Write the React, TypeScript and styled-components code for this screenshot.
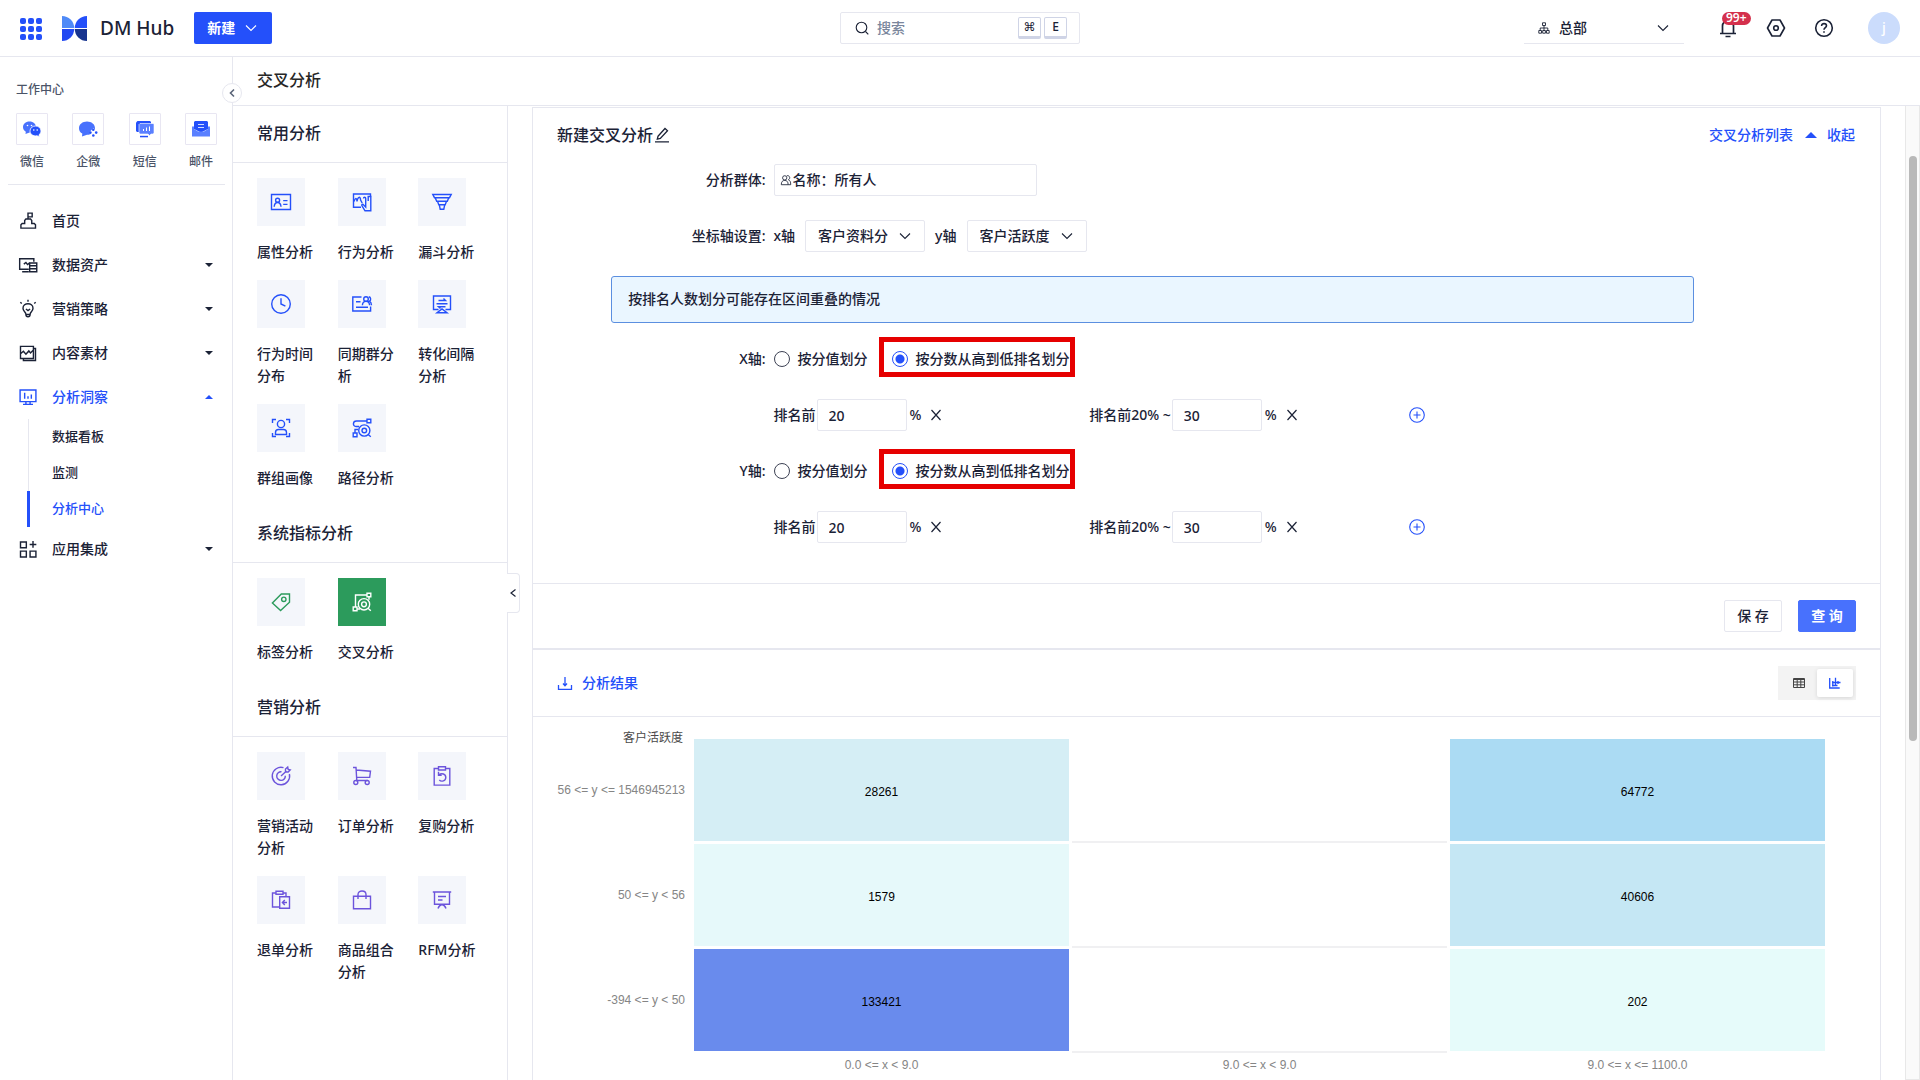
import React, { useState } from "react";
import styled, { createGlobalStyle, css } from "styled-components";

const c = {
  text: "#1b2236",
  sub: "#4b5468",
  brand: "#2450fa",
  line: "#e6e7ef",
  tile: "#f4f6fb",
  green: "#2c9b5c",
  purple: "#6c54dc",
  danger: "#e60000",
};

const Global = createGlobalStyle`
  *, *::before, *::after { box-sizing: border-box; }
  body { margin: 0; background: #fff; overflow: hidden; }
  body, button, input, select {
    font-family: "Noto Sans", "Noto Sans CJK SC", sans-serif;
    font-size: 14px;
    line-height: 22px;
    font-weight: 500;
    color: ${c.text};
  }
  button { padding: 0; border: 0; background: none; cursor: pointer; }
  a { text-decoration: none; color: inherit; }
  h1, h2, p, ul { margin: 0; padding: 0; }
  ul { list-style: none; }
`;

/* ---------- icons ---------- */

const Svg = styled.svg<{ $w?: number }>`
  display: block;
  flex: none;
  fill: none;
  stroke: currentColor;
  stroke-width: ${(p) => p.$w ?? 1.4};
  overflow: visible;
`;

const glyphs: Record<string, React.ReactNode> = {
  idcard: (
    <>
      <path d="M2.5 4.5h19v15h-19z" />
      <circle cx="8.6" cy="10.3" r="2" />
      <path d="M5.2 16.8c.2-2.8 1.4-4.3 3.4-4.3s3.2 1.5 3.4 4.3M14.2 10.6h4.3M14.2 14.4h4.3" />
    </>
  ),
  behavior: (
    <>
      <path d="M11 17.2H3.5V4h17v2.5" />
      <path d="M4 11.5c1.200-4 2.600-4 3 0 .8-5 3.400-5.500 3.600-1.500l1.600 3" />
      <path d="M13.500 8.500c0-1.600 2.200-1.600 2.200 0V17l-2.500-2.500c-1.500-.6-1.800.6-1 1.600L15 20.800h5.800V6.500h-2.600v4.500" />
    </>
  ),
  funnel: (
    <path d="M2.800 4.500h18.400l-1.700 3.200h-15zM5.200 7.700h13.600l-1.500 3.600H6.700zM7.500 11.300h9l-1.300 3.500H8.800zM9.300 14.800h5.400l-.9 4.400h-3.600zM6.700 11.300h10.600" />
  ),
  clock: (
    <>
      <circle cx="12" cy="12" r="9.3" />
      <path d="M12 6.2V12l4.4 2.2" />
    </>
  ),
  cohort: (
    <>
      <path d="M11.5 5H2.800v14h17.800v-4.500M6 9.800h4.500M6 15.200h12" />
      <circle cx="16" cy="7" r="2.3" />
      <path d="M12.400 13.200c.2-2.500 1.500-3.800 3.600-3.800s3.400 1.300 3.600 3.800M18.800 4.800c2.200.3 2.500 3.600.6 4.400 1.400.7 2 2 2.100 4" />
    </>
  ),
  convert: (
    <>
      <path d="M8.500 17.500H3.500V4h17v13.500h-5M7 20.800h10L12 17z" />
      <path d="M6.500 11.800h11M8.500 8.500h7L13.500 6.600M15.500 14.800h-7l2 1.800" />
    </>
  ),
  portrait: (
    <>
      <path d="M3.500 7V3.500H7M17 3.500h3.500V7M3.500 17v3.500H7M17 20.500h3.500V17" />
      <circle cx="12" cy="8" r="3.6" />
      <path d="M6.500 18.500v-2c0-2 1.300-3 3-3h5c1.700 0 3 1 3 3v2z" />
    </>
  ),
  path: (
    <>
      <path d="M17 3.200h3.800v3.600H17zM3.200 17H7v3.800H3.200zM17 5H6.500c-4 0-4 5.500-.5 5.500h3M5 17v-3.500h3" />
      <circle cx="14.3" cy="14.5" r="5.6" />
      <circle cx="14.3" cy="14.5" r="2.3" />
      <path d="M18.200 18.500l2.600 2.300" />
    </>
  ),
  tag: (
    <>
      <path d="M12.300 4h8.200v8.200L11.600 20.600 3.400 13z" />
      <circle cx="14.8" cy="9.3" r="2.2" />
    </>
  ),
  cross: (
    <>
      <path d="M17 3.200h3.800v3.600H17zM3.200 17H7v3.800H3.200zM17 5H5.500v12M7 19h3M19 6.800v3" />
      <circle cx="14" cy="14.3" r="5.7" />
      <circle cx="14" cy="14.3" r="2.4" />
      <path d="M18 18.300l2.800 2.500" />
    </>
  ),
  target: (
    <>
      <path d="M14.500 3.700A8.700 8.700 0 1 0 20.400 10" />
      <path d="M12.500 7.800a4.300 4.300 0 1 0 3.800 3.900M12 12l5.500-5M16.500 7.800V5l2.200-2 .5 2.500 2 .5-2 2z" />
    </>
  ),
  cart: (
    <>
      <path d="M3 3.500h3l.8 13h10.700M6.200 6l14.300 1.200-.8 6.200H6.700" />
      <circle cx="5.8" cy="18.5" r="2" />
      <circle cx="17.2" cy="18.5" r="2" />
    </>
  ),
  repurchase: (
    <>
      <path d="M8.500 4.500H4.200v16.600h15.600V4.500h-4.300M8.500 2.800h7v3.200h-7z" />
      <path d="M8.500 7.800v3.400h3.200M8.800 11c3-2.600 7-.8 7 2.400 0 3.400-4.400 4.800-6.500 2.600" />
    </>
  ),
  refund: (
    <>
      <path d="M7 5H3.500v14h7.200M14 5h3v3.500M7 3.200h7v3H7z" />
      <path d="M10.700 8.700h9.800v11.600h-9.800zM18 14.500h-4.500M15.800 12l-2.400 2.500 2.400 2.500" />
    </>
  ),
  bag: <path d="M3.500 8.200h17v12.600h-17zM8 11V6.500c0-4.700 8-4.700 8 0V11" />,
  board: <path d="M2.800 4h18.400M4.500 4v12.300h15V4M8 8.500h8M8 12h4.500M8 20.500c.8-2.500 2-3.600 4-4 2 .4 3.200 1.500 4 4" />,
  home: <path d="M12 9.500V2.500h5V7h-5M3.500 20.500v-4l1.500-1.500h3v-3.500l1.500-2h5.500l1.500 2V15h3l1.500 1.500v4z" />,
  assets: (
    <>
      <path d="M13 17H2V4.500h17V8M5 20h8M7 11l2.500-2 2 2.500L14 9.500" />
      <path d="M14 9.500h8.500V20H14zM14 13h8.500M14 16.500h8.500" />
    </>
  ),
  bulb: (
    <path d="M9.500 18.500c0-3-3.500-3.500-3.500-7.500 0-7 12-7 12 0 0 4-3.500 4.500-3.500 7.500zM9.500 18.500c0 3.700 5 3.700 5 0M9.500 12l2.500 2 2.500-2M12 3.200V.8M4.500 5.500L2.800 4M19.500 5.500L21.200 4" />
  ),
  content: <path d="M3 4h15.500v14.500H3zM18.500 6.500H21V21H6.500v-2.500M3 13l3.500-3 3 3.500 3.500-4 2 2.500 3.500-3.500" />,
  monitor: <path d="M2.500 3.500h19v14h-19zM6 20.800h12M9.500 17.500v3M14.500 17.500v3M8 7v7M12 11v3M16 9v5" />,
  apps: <path d="M3 3.500h7v7H3zM3 14.500h7v7H3zM14.500 14.500h7v7h-7zM18 2.500v8M14 6.500h8" />,
};

const Glyph = ({ name, size = 24, w }: { name: string; size?: number; w?: number }) => (
  <Svg width={size} height={size} viewBox="0 0 24 24" $w={w} aria-hidden>
    {glyphs[name]}
  </Svg>
);

const ChevronDown = () => (
  <Svg width="12" height="8" viewBox="0 0 12 8" $w={1.1} aria-hidden>
    <path d="M1 1.500l5 5 5-5" />
  </Svg>
);

const Triangle = ({ up, size = 8 }: { up?: boolean; size?: number }) => (
  <Svg width={size} height={size / 2} viewBox="0 0 8 4" aria-hidden>
    <path d={up ? "M0 4l4-4 4 4z" : "M0 0l4 4 4-4z"} fill="currentColor" stroke="none" />
  </Svg>
);

/* ---------- shell ---------- */

const Page = styled.div`
  display: flex;
  flex-direction: column;
  height: 100vh;
  overflow: hidden;
`;

const Header = styled.header`
  display: grid;
  grid-template-columns: 1fr 240px 1fr;
  align-items: center;
  flex: none;
  height: 57px;
  padding: 0 20px;
  border-bottom: 1px solid ${c.line};
`;

const HeaderSide = styled.div<{ $end?: boolean }>`
  display: flex;
  align-items: center;
  justify-content: ${(p) => (p.$end ? "flex-end" : "flex-start")};
`;

const Brand = styled.a`
  display: flex;
  align-items: center;
  gap: 13px;
  margin: 0 20px 0 22px;
  font-size: 19px;
  line-height: 28px;
`;

const CreateButton = styled.button`
  display: flex;
  align-items: center;
  gap: 10px;
  height: 32px;
  padding: 0 15px 0 13px;
  border-radius: 2px;
  background: ${c.brand};
  color: #fff;
  font-weight: 700;
`;

const Search = styled.label`
  display: flex;
  align-items: center;
  gap: 3px;
  height: 32px;
  padding: 0 12px 0 14px;
  border: 1px solid ${c.line};
  border-radius: 2px;
`;

const SearchInput = styled.input`
  flex: 1;
  min-width: 0;
  margin-left: 5px;
  padding: 0;
  border: 0;
  outline: 0;
  background: none;
  &::placeholder { color: #7a869c; }
`;

const Key = styled.kbd`
  width: 23px;
  height: 22px;
  border: 1px solid #cfd4e6;
  border-bottom-width: 3px;
  border-radius: 2px;
  font-family: "Noto Sans", "DejaVu Sans", sans-serif;
  font-size: 12px;
  line-height: 18px;
  text-align: center;
`;

const OrgSelect = styled.button`
  display: flex;
  align-items: center;
  gap: 9px;
  width: 160px;
  height: 32px;
  margin-right: 34px;
  padding: 0 15px 0 14px;
  border-bottom: 1px solid ${c.line};
  text-align: left;
  & > span { flex: 1; }
`;

const HeaderActions = styled.div`
  display: flex;
  align-items: center;
  gap: 28px;
  margin-right: 34px;
`;

const IconButton = styled.button`
  position: relative;
  display: grid;
  place-items: center;
  width: 20px;
  height: 20px;
`;

const Badge = styled.span`
  position: absolute;
  left: 4px;
  top: -6px;
  height: 13px;
  padding: 0 4px;
  border-radius: 7px;
  background: #d4304c;
  color: #fff;
  font-size: 12px;
  line-height: 12px;
  font-weight: 600;
`;

const Avatar = styled.button`
  width: 32px;
  height: 32px;
  border-radius: 50%;
  background: #cbdcfc;
  color: #fff;
`;

const Body = styled.div`
  display: flex;
  flex: 1;
  min-height: 0;
`;

/* ---------- sidebar ---------- */

const Sidebar = styled.aside`
  position: relative;
  flex: none;
  width: 233px;
  padding: 24px 7px 0 8px;
  border-right: 1px solid ${c.line};
`;

const SidebarTitle = styled.p`
  padding: 0 8px;
  font-size: 12px;
  line-height: 18px;
  color: ${c.sub};
`;

const Channels = styled.div`
  display: flex;
  justify-content: space-between;
  margin-bottom: 14px;
  padding: 14px 8px;
  border-bottom: 1px solid ${c.line};
`;

const Channel = styled.button`
  display: grid;
  justify-items: center;
  gap: 9px;
  width: 32px;
  font-size: 12px;
  line-height: 16px;
  color: ${c.sub};
`;

const ChannelIcon = styled.span`
  display: grid;
  place-items: center;
  width: 32px;
  height: 32px;
  border: 1px solid #e8e6f2;
  border-radius: 1px;
`;

const NavItem = styled.a<{ $active?: boolean }>`
  display: flex;
  align-items: center;
  gap: 14px;
  height: 44px;
  padding: 0 12px 0 10px;
  color: ${(p) => (p.$active ? c.brand : c.text)};
  & > span { flex: 1; }
`;

const SubList = styled.ul`
  margin-left: 20px;
  border-left: 1px solid ${c.line};
`;

const SubItem = styled.a<{ $active?: boolean }>`
  display: block;
  height: 36px;
  margin-left: -2px;
  padding-left: 22px;
  border-left: 3px solid ${(p) => (p.$active ? c.brand : "transparent")};
  font-size: 13px;
  line-height: 34px;
  color: ${(p) => (p.$active ? c.brand : c.text)};
`;

const CollapseButton = styled.button`
  position: absolute;
  z-index: 2;
  top: 26px;
  right: -10px;
  display: grid;
  place-items: center;
  width: 20px;
  height: 20px;
  border: 1px solid ${c.line};
  border-radius: 50%;
  background: #fff;
  color: #5a6478;
`;

/* ---------- analysis picker ---------- */

const Content = styled.div`
  display: flex;
  flex-direction: column;
  flex: 1;
  min-width: 0;
`;

const PageTitle = styled.h1`
  flex: none;
  height: 49px;
  padding-left: 24px;
  border-bottom: 1px solid ${c.line};
  color: #262626;
  font-size: 16px;
  line-height: 46px;
  font-weight: 500;
`;

const Picker = styled.aside`
  position: relative;
  flex: none;
  width: 275px;
  border-right: 1px solid ${c.line};
`;

const PickerTitle = styled.h2`
  height: 57px;
  padding-left: 24px;
  border-bottom: 1px solid ${c.line};
  font-size: 16px;
  line-height: 54px;
  font-weight: 500;
`;

const PickerGrid = styled.div`
  display: grid;
  grid-template-columns: repeat(3, 1fr);
  row-gap: 17px;
  padding: 15px 8px 17px 24px;
`;

const PickerItem = styled.a`
  width: 60px;
`;

const Tile = styled.span<{ $tone: string; $active?: boolean }>`
  display: grid;
  place-items: center;
  width: 48px;
  height: 48px;
  margin-bottom: 15px;
  background: ${(p) => (p.$active ? p.$tone : c.tile)};
  color: ${(p) => (p.$active ? "#fff" : p.$tone)};
`;

const PickerHandle = styled.button`
  position: absolute;
  left: 100%;
  top: 467px;
  display: grid;
  place-items: center;
  width: 13px;
  height: 40px;
  border: 1px solid ${c.line};
  border-left: 0;
  border-radius: 0 4px 4px 0;
  background: #fff;
`;

/* ---------- main card ---------- */

const Main = styled.main`
  flex: 1;
  min-width: 0;
  padding: 1px 24px 0;
  overflow: hidden;
`;

const ScrollTrack = styled.div`
  flex: none;
  width: 15px;
  height: 100%;
  padding: 50px 3px;
  border: 1px solid #e8e8e8;
  border-top: 0;
  background: #fafafa;
`;

const ScrollThumb = styled.div`
  width: 8px;
  height: 67%;
  border-radius: 4px;
  background: #b9b9b9;
`;

const Card = styled.section`
  border: 1px solid ${c.line};
`;

const Between = styled.div`
  display: flex;
  align-items: center;
  justify-content: space-between;
`;

const CardHead = styled(Between)`
  height: 56px;
  padding: 0 25px 2px 24px;
`;

const CardTitle = styled.h2`
  display: flex;
  align-items: center;
  gap: 1px;
  font-size: 16px;
  line-height: 24px;
  font-weight: 500;
`;

const CardLinks = styled.div`
  display: flex;
  align-items: center;
  gap: 12px;
  color: ${c.brand};
`;

const Collapse = styled.button`
  display: flex;
  align-items: center;
  gap: 10px;
  color: inherit;
`;

const Form = styled.form`
  padding: 0 24px 16px;
`;

const Row = styled.div`
  display: grid;
  grid-template-columns: 4fr 20fr;
  align-items: center;
  min-height: 32px;
  margin-bottom: 24px;
`;

const RowLabel = styled.span`
  padding-right: 8px;
  text-align: right;
`;

const Inline = styled.div<{ $gap?: number }>`
  display: flex;
  align-items: center;
  gap: ${(p) => p.$gap ?? 8}px;
`;

const box = css`
  height: 32px;
  border: 1px solid ${c.line};
  border-radius: 2px;
  background: #fff;
`;

const GroupField = styled.span`
  ${box}
  display: flex;
  align-items: center;
  gap: 1px;
  width: 263px;
  padding-left: 5px;
`;

const BareInput = styled.input`
  flex: 1;
  min-width: 0;
  padding: 0;
  border: 0;
  outline: 0;
  background: none;
`;

const SelectWrap = styled.span`
  ${box}
  display: flex;
  align-items: center;
  width: 120px;
  padding-right: 13px;
  svg { pointer-events: none; }
`;

const Select = styled.select`
  flex: 1;
  min-width: 0;
  height: 30px;
  padding: 0 0 0 12px;
  border: 0;
  outline: 0;
  background: none;
  appearance: none;
`;

const NoticeRow = styled.div`
  display: grid;
  grid-template-columns: 1fr 20fr 3fr;
  margin-bottom: 20px;
`;

const Notice = styled.p`
  grid-column: 2;
  height: 47px;
  padding: 0 16px;
  border: 1px solid #5b8fe0;
  border-radius: 3px;
  background: #eaf6ff;
  line-height: 43px;
`;

const RadioLabel = styled.label<{ $marked?: boolean }>`
  position: relative;
  display: flex;
  align-items: center;
  gap: 8px;
  height: 32px;
  ${(p) =>
    p.$marked &&
    css`
      &::after {
        content: "";
        position: absolute;
        inset: -6px -5px -2px -13px;
        border: 5px solid ${c.danger};
        pointer-events: none;
      }
    `}
`;

const Radio = styled.input`
  appearance: none;
  width: 16px;
  height: 16px;
  margin: 0;
  border: 1px solid #3d4254;
  border-radius: 50%;
  &:checked {
    border-color: ${c.brand};
    background: radial-gradient(circle, ${c.brand} 0 4px, #fff 5px);
  }
`;

const Ranges = styled.div`
  display: grid;
  grid-template-columns: 7fr 7fr 10fr;
  align-items: center;
`;

const NumberInput = styled.input`
  ${box}
  width: 90px;
  padding: 0 11px;
  outline: 0;
`;

const RemoveButton = styled.button`
  margin-left: 8px;
`;

const Suffix = styled.span`
  margin-left: 3px;
`;

const AddButton = styled.button`
  display: grid;
  justify-self: start;
  margin-left: 4px;
  color: ${c.brand};
`;

const RangeLabel = styled.label`
  display: flex;
  align-items: center;
  gap: 1px;
`;

const Footer = styled.div`
  display: flex;
  justify-content: flex-end;
  gap: 16px;
  padding: 16px 24px;
  border-top: 1px solid ${c.line};
  border-bottom: 2px solid ${c.line};
`;

const Button = styled.button<{ $primary?: boolean }>`
  width: 58px;
  height: 32px;
  border: 1px solid ${(p) => (p.$primary ? "#4871fd" : c.line)};
  border-radius: 2px;
  background: ${(p) => (p.$primary ? "#4871fd" : "#fff")};
  color: ${(p) => (p.$primary ? "#fff" : c.text)};
  font-weight: ${(p) => (p.$primary ? 700 : 500)};
  line-height: 28px;
`;

const ResultHead = styled(Between)`
  height: 67px;
  padding: 0 24px;
  border-bottom: 1px solid ${c.line};
`;

const Download = styled.button`
  display: flex;
  align-items: center;
  gap: 9px;
  color: ${c.brand};
`;

const Toggle = styled.div`
  display: flex;
  padding: 3px;
  background: #f3f3f3;
`;

const ToggleButton = styled.button<{ $on?: boolean }>`
  display: grid;
  place-items: center;
  width: 36px;
  height: 28px;
  border-radius: 2px;
  background: ${(p) => (p.$on ? "#fff" : "none")};
  box-shadow: ${(p) => (p.$on ? "0 1px 4px rgba(0,0,0,.12)" : "none")};
  color: ${(p) => (p.$on ? c.brand : "#444")};
`;

/* ---------- heat map ---------- */

const ChartLayout = styled.div`
  display: grid;
  grid-template-columns: 161px 1fr;
  padding: 22px 55px 20px 0;
  font-family: "Liberation Sans", "Noto Sans CJK SC", sans-serif;
  font-size: 12px;
  line-height: 16px;
  font-weight: 400;
`;

const ChartLabels = styled.div`
  display: grid;
  grid-auto-rows: 102px;
  gap: 3px;
  color: #858585;
`;

const YLabel = styled.span`
  position: relative;
  display: flex;
  align-items: center;
  justify-content: flex-end;
  padding-right: 9px;
`;

const AxisName = styled.span`
  position: absolute;
  top: -9px;
  right: 11px;
  color: #4a4a4a;
`;

const Cells = styled.div`
  display: grid;
  grid-template-columns: repeat(3, 1fr);
  grid-template-rows: repeat(3, 102px) 19px;
  gap: 3px;
`;

const Cell = styled.div<{ $bg?: string }>`
  display: grid;
  place-items: center;
  padding-top: 4px;
  background: ${(p) => p.$bg ?? "#fff"};
  box-shadow: ${(p) => (p.$bg ? "none" : "0 2px #f0f0f2")};
  color: #000;
`;

const XLabel = styled.span`
  align-self: end;
  text-align: center;
  color: #858585;
`;

/* ---------- data ---------- */

const sections = [
  {
    title: "常用分析",
    tone: c.brand,
    items: [
      ["idcard", "属性分析"],
      ["behavior", "行为分析"],
      ["funnel", "漏斗分析"],
      ["clock", "行为时间分布"],
      ["cohort", "同期群分析"],
      ["convert", "转化间隔分析"],
      ["portrait", "群组画像"],
      ["path", "路径分析"],
    ],
  },
  {
    title: "系统指标分析",
    tone: c.green,
    items: [
      ["tag", "标签分析"],
      ["cross", "交叉分析"],
    ],
  },
  {
    title: "营销分析",
    tone: c.purple,
    items: [
      ["target", "营销活动分析"],
      ["cart", "订单分析"],
      ["repurchase", "复购分析"],
      ["refund", "退单分析"],
      ["bag", "商品组合分析"],
      ["board", "RFM分析"],
    ],
  },
];

const yBands = ["56 <= y <= 1546945213", "50 <= y < 56", "-394 <= y < 50"];
const xBands = ["0.0 <= x < 9.0", "9.0 <= x < 9.0", "9.0 <= x <= 1100.0"];
const heat: { v?: number; bg?: string }[] = [
  { v: 28261, bg: "#d5eef5" }, {}, { v: 64772, bg: "#abdbf3" },
  { v: 1579, bg: "#e6f9fa" }, {}, { v: 40606, bg: "#c5e7f4" },
  { v: 133421, bg: "#698bed" }, {}, { v: 202, bg: "#e6fbfa" },
];

const channels: [string, React.ReactNode][] = [
  ["微信", (
    <>
      <path d="M7.500 1.500c4 0 6.500 2.500 6.500 5.500s-2.500 5.500-6.500 5.500l-4 1.500.3-2.300C2 10.700 1 9 1 7c0-3 2.500-5.500 6.500-5.500z" fill="#4871fd" />
      <path d="M13.500 6c3 0 5.500 2 5.500 5 0 1.600-.8 3-2 3.800l.3 1.900-2.300-.9c-4 .6-7-1.600-7-4.800 0-3 2.500-5 5.500-5z" fill={c.brand} stroke="#fff" strokeWidth=".8" />
      <circle cx="5.5" cy="5.5" r=".8" fill="#fff" /><circle cx="9.5" cy="5.5" r=".8" fill="#fff" />
      <circle cx="11.8" cy="10" r=".8" fill="#fff" /><circle cx="15.2" cy="10" r=".8" fill="#fff" />
    </>
  )],
  ["企微", (
    <>
      <path d="M9 1.500c4.500 0 8 2.800 8 6.700 0 3.800-3.500 6.600-8 6.600l-5 1.700.3-2.900C2.300 12.500 1 10.500 1 8.200c0-3.900 3.500-6.700 8-6.700z" fill="#4871fd" />
      <path d="M15.500 8l4 4.500-4 4.500-4.500-4.500z" fill="#fff" />
      <circle cx="15.3" cy="9.7" r="1.3" fill={c.brand} /><circle cx="18.2" cy="12.6" r="1.3" fill={c.brand} />
      <circle cx="15.3" cy="15.5" r="1.3" fill={c.brand} /><circle cx="12.4" cy="12.6" r="1.3" fill={c.brand} />
    </>
  )],
  ["短信", (
    <>
      <path d="M2.500 1h12.500l1 1v10H2L1 11V2.500z" fill={c.brand} />
      <path d="M5 3.500h13l1 1v8.500l-1 1h-2L14.500 15.500 13 14H5l-1-1V4.500z" fill="#5a80ff" stroke="#fff" strokeWidth=".6" />
      <path d="M5 15.800h8v1.500H5z" fill={c.brand} />
      <path d="M8.500 9v2M11.500 7.500V11M14.500 6.500V11" stroke="#fff" />
    </>
  )],
  ["邮件", (
    <>
      <path d="M4 1h12l1 1v7l-7 3.500L3 9V2z" fill={c.brand} />
      <path d="M1 6.500h2V9l4 2.500h6L17 9V6.500h2V16.500H1z" fill="#5a80ff" />
      <path d="M7 4.500h6M7 7.500h6" stroke="#cfdcff" />
    </>
  )],
];

const nav: [string, string][] = [
  ["home", "首页"],
  ["assets", "数据资产"],
  ["bulb", "营销策略"],
  ["content", "内容素材"],
  ["monitor", "分析洞察"],
  ["apps", "应用集成"],
];

const AxisFields = ({ axis }: { axis: string }) => {
  const [mode, setMode] = useState("rank");
  return (
    <>
      <Row role="radiogroup" aria-label={`${axis}轴`}>
        <RowLabel>{axis}轴:</RowLabel>
        <Inline $gap={24}>
          <RadioLabel>
            <Radio type="radio" name={`mode-${axis}`} checked={mode === "score"} onChange={() => setMode("score")} />
            按分值划分
          </RadioLabel>
          <RadioLabel $marked>
            <Radio type="radio" name={`mode-${axis}`} checked={mode === "rank"} onChange={() => setMode("rank")} />
            按分数从高到低排名划分
          </RadioLabel>
        </Inline>
      </Row>
      <Row>
        <span />
        <Ranges>
          {[["排名前", "20"], ["排名前20% ~", "30"]].map(([label, value], i) => (
            <Inline key={label} $gap={0}>
              <RangeLabel>
                {label}
                <NumberInput type="text" defaultValue={value} />
              </RangeLabel>
              <Suffix>%</Suffix>
              <RemoveButton type="button" aria-label={`删除区间${i + 1}`}>
                <Svg width="14" height="14" viewBox="0 0 14 14" $w={1.2}>
                  <path d="M2.500 2l9 10M11.500 2l-9 10" />
                </Svg>
              </RemoveButton>
            </Inline>
          ))}
          <AddButton type="button" aria-label="添加区间">
            <Svg width="16" height="16" viewBox="0 0 16 16" $w={1.1}>
              <circle cx="8" cy="8" r="7.3" />
              <path d="M8 4.500v7M4.500 8h7" />
            </Svg>
          </AddButton>
        </Ranges>
      </Row>
    </>
  );
};

export default function App() {
  return (
    <Page>
      <Global />
      <Header>
        <HeaderSide>
          <IconButton aria-label="应用列表">
            <Svg width="22" height="22" viewBox="0 0 22 22">
              {[3, 11, 19].map((y) =>
                [3, 11, 19].map((x) => (
                  <rect key={`${x}-${y}`} x={x - 3} y={y - 3} width="6" height="6" rx="2" fill={c.brand} stroke="none" />
                ))
              )}
            </Svg>
          </IconButton>
          <Brand href="#">
            <Svg width="25" height="25" viewBox="0 0 25 25" aria-hidden>
              <g stroke="none">
                <path d="M0 0A12.200 12 0 0 1 12.200 12H0z" fill="#4f8af7" />
                <path d="M0 25A12.200 12 0 0 0 12.200 13H0z" fill="#2148f2" />
                <path d="M25 0A12.200 12 0 0 0 12.800 12H25z" fill={c.brand} />
                <path d="M25 25A12.200 12 0 0 1 12.800 13H25z" fill="#17348f" />
              </g>
            </Svg>
            DM Hub
          </Brand>
          <CreateButton>
            新建
            <ChevronDown />
          </CreateButton>
        </HeaderSide>
        <Search>
          <Svg width="14" height="14" viewBox="0 0 14 14" $w={1.1} aria-hidden>
            <circle cx="6.5" cy="6.5" r="5.3" />
            <path d="M10.500 10.500l2.800 2.800" />
          </Svg>
          <SearchInput type="text" placeholder="搜索" aria-label="搜索" />
          <Key>⌘</Key>
          <Key>E</Key>
        </Search>
        <HeaderSide $end>
          <OrgSelect aria-label="总部">
            <Svg width="12" height="12" viewBox="0 0 12 12" $w={0.9} aria-hidden>
              <path d="M4.500.8h3v2.700h-3zM.8 8.500h2.700v2.700H.8zM4.700 8.500h2.700v2.700H4.700zM8.500 8.500h2.700v2.700H8.500zM6 3.500v5M2.200 8.500V6h7.600v2.500" />
            </Svg>
            <span>总部</span>
            <ChevronDown />
          </OrgSelect>
          <HeaderActions>
            <IconButton aria-label="通知">
              <Svg width="20" height="20" viewBox="0 0 20 20" $w={1.7} aria-hidden>
                <path d="M2 15.500h16M4.500 15V8a5.500 5.500 0 0 1 11 0v7M7.500 18.500h5" />
              </Svg>
              <Badge>99+</Badge>
            </IconButton>
            <IconButton aria-label="设置">
              <Svg width="20" height="20" viewBox="0 0 20 20" $w={1.6} aria-hidden>
                <path d="M6 2h8l4.500 8-4.500 8H6l-4.500-8z" strokeLinejoin="round" />
                <circle cx="10" cy="10" r="2.3" />
              </Svg>
            </IconButton>
            <IconButton aria-label="帮助">
              <Svg width="20" height="20" viewBox="0 0 20 20" $w={1.6} aria-hidden>
                <circle cx="10" cy="10" r="8.3" />
                <path d="M7.600 8c0-3.300 4.900-3 4.900-.2 0 1.800-2.500 1.900-2.500 4M10 13.300v1.500" />
              </Svg>
            </IconButton>
          </HeaderActions>
          <Avatar>j</Avatar>
        </HeaderSide>
      </Header>

      <Body>
        <Sidebar>
          <SidebarTitle>工作中心</SidebarTitle>
          <Channels>
            {channels.map(([label, art]) => (
              <Channel key={label}>
                <ChannelIcon>
                  <Svg width="20" height="18" viewBox="0 0 20 18" $w={1} aria-hidden>
                    <g stroke="none">{art}</g>
                  </Svg>
                </ChannelIcon>
                {label}
              </Channel>
            ))}
          </Channels>
          <nav>
            {nav.map(([icon, label], i) => {
              const open = label === "分析洞察";
              return (
                <React.Fragment key={label}>
                  <NavItem href="#" $active={open}>
                    <Glyph name={icon} size={20} w={1.7} />
                    <span>{label}</span>
                    {i > 0 && <Triangle up={open} />}
                  </NavItem>
                  {open && (
                    <SubList>
                      <li><SubItem href="#">数据看板</SubItem></li>
                      <li><SubItem href="#">监测</SubItem></li>
                      <li><SubItem href="#" $active>分析中心</SubItem></li>
                    </SubList>
                  )}
                </React.Fragment>
              );
            })}
          </nav>
          <CollapseButton aria-label="收起菜单">
            <Svg width="6" height="8" viewBox="0 0 6 8" $w={1.6}>
              <path d="M5 .5L1.500 4 5 7.500" />
            </Svg>
          </CollapseButton>
        </Sidebar>

        <Content>
          <PageTitle>交叉分析</PageTitle>
          <Body>
            <Picker>
              {sections.map((s) => (
                <section key={s.title}>
                  <PickerTitle>{s.title}</PickerTitle>
                  <PickerGrid>
                    {s.items.map(([icon, label]) => (
                      <PickerItem key={label} href="#">
                        <Tile $tone={s.tone} $active={icon === "cross"}>
                          <Glyph name={icon} />
                        </Tile>
                        {label}
                      </PickerItem>
                    ))}
                  </PickerGrid>
                </section>
              ))}
              <PickerHandle aria-label="收起分析列表">
                <Svg width="6" height="10" viewBox="0 0 6 10" $w={1.2}>
                  <path d="M5.500 1.500L1 5l4.500 3.500" />
                </Svg>
              </PickerHandle>
            </Picker>

            <Main>
              <Card>
                <CardHead>
                  <CardTitle>
                    新建交叉分析
                    <Svg width="16" height="16" viewBox="0 0 16 16" $w={1.3} aria-hidden>
                      <path d="M1 14.800h14M4 9.300L11 1.500l2.500 2.200-7.200 7.800-3 .7z" />
                    </Svg>
                  </CardTitle>
                  <CardLinks>
                    <a href="#">交叉分析列表</a>
                    <Collapse>
                      <Triangle up size={12} />
                      收起
                    </Collapse>
                  </CardLinks>
                </CardHead>

                <Form onSubmit={(e) => e.preventDefault()}>
                  <Row>
                    <RowLabel as="label" htmlFor="group">分析群体:</RowLabel>
                    <GroupField>
                      <Svg width="12" height="12" viewBox="0 0 14 14" $w={1} aria-hidden>
                        <circle cx="5.5" cy="4.5" r="2.5" />
                        <path d="M1.500 12.500c0-3.500 1.500-5 4-5s4 1.500 4 5zM8 2c3.500-.8 4.500 3.500 1.800 4.700 2 .8 2.700 2.500 2.700 5.800H9.500" />
                      </Svg>
                      <BareInput id="group" type="text" defaultValue="名称：所有人" />
                    </GroupField>
                  </Row>
                  <Row>
                    <RowLabel>坐标轴设置:</RowLabel>
                    <Inline $gap={10}>
                      <label htmlFor="axis-x">x轴</label>
                      <SelectWrap>
                        <Select id="axis-x"><option>客户资料分</option></Select>
                        <ChevronDown />
                      </SelectWrap>
                      <label htmlFor="axis-y">y轴</label>
                      <SelectWrap>
                        <Select id="axis-y"><option>客户活跃度</option></Select>
                        <ChevronDown />
                      </SelectWrap>
                    </Inline>
                  </Row>
                  <NoticeRow>
                    <Notice>按排名人数划分可能存在区间重叠的情况</Notice>
                  </NoticeRow>
                  <AxisFields axis="X" />
                  <AxisFields axis="Y" />
                </Form>

                <Footer>
                  <Button>保 存</Button>
                  <Button $primary>查 询</Button>
                </Footer>

                <ResultHead>
                  <Download>
                    <Svg width="16" height="16" viewBox="0 0 16 16" $w={1.3} aria-hidden>
                      <path d="M1.500 10v4.300h13V10M8 2v8.500M6 8.500l2 2.300 2-2.300" />
                    </Svg>
                    分析结果
                  </Download>
                  <Toggle>
                    <ToggleButton aria-label="表格">
                      <Svg width="12" height="12" viewBox="0 0 12 12" $w={1}>
                        <path d="M.5 1.500h11v9H.5zM.5 2.500h11M.5 5h11M.5 7.800h11M4.200 3v7.500M7.800 3v7.500" />
                      </Svg>
                    </ToggleButton>
                    <ToggleButton $on aria-label="图表">
                      <Svg width="12" height="12" viewBox="0 0 12 12" $w={1.3}>
                        <path d="M.7 1v10h10M3 8.500h5.500M3 5.500h8.500M6.500.8v8.500M3.800 4v5.500M9 4v3" />
                      </Svg>
                    </ToggleButton>
                  </Toggle>
                </ResultHead>

                <ChartLayout>
                  <ChartLabels>
                    {yBands.map((label, i) => (
                      <YLabel key={label}>
                        {i === 0 && <AxisName>客户活跃度</AxisName>}
                        {label}
                      </YLabel>
                    ))}
                  </ChartLabels>
                  <Cells>
                    {heat.map((h, i) => (
                      <Cell key={i} $bg={h.bg}>{h.v}</Cell>
                    ))}
                    {xBands.map((label) => (
                      <XLabel key={label}>{label}</XLabel>
                    ))}
                  </Cells>
                </ChartLayout>
              </Card>
            </Main>
            <ScrollTrack aria-hidden>
              <ScrollThumb />
            </ScrollTrack>
          </Body>
        </Content>
      </Body>
    </Page>
  );
}
